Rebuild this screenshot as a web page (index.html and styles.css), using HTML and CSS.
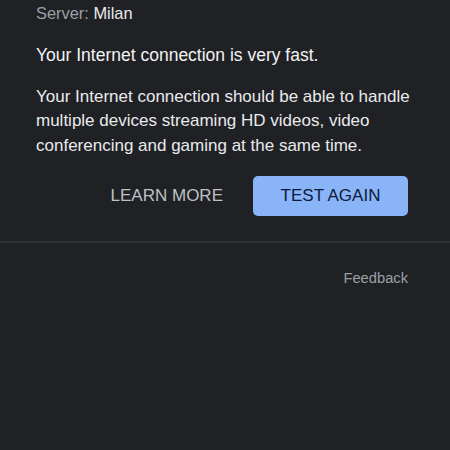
FILE: index.html
```html
<!DOCTYPE html>
<html>
<head>
<meta charset="utf-8">
<link rel="stylesheet" href="styles.css">
</head>
<body>
<div class="content">
  <div class="server"><span class="label">Server:</span> <span class="value">Milan</span></div>
  <div class="heading">Your Internet connection is very fast.</div>
  <p class="desc">Your Internet connection should be able to handle multiple devices streaming HD videos, video conferencing and gaming at the same time.</p>
  <div class="actions">
    <button class="btn-text">LEARN MORE</button>
    <button class="btn-primary">TEST AGAIN</button>
  </div>
</div>
<div class="divider"></div>
<div class="footer">
  <span class="feedback">Feedback</span>
</div>
</body>
</html>
```
FILE: styles.css
```css
html, body {
  margin: 0;
  padding: 0;
  background: #202124;
  height: 100%;
}
body {
  font-family: "Liberation Sans", Arial, sans-serif;
  color: #e8eaed;
}
.content {
  padding: 1px 40px 0 36px;
}
.server {
  font-size: 16.4px;
  line-height: 24px;
}
.server .label { color: #9aa0a6; }
.server .value { color: #e8eaed; }
.heading {
  margin-top: 18px;
  font-size: 17.5px;
  line-height: 24px;
  font-weight: 500;
  color: #f1f3f4;
}
.desc {
  margin: 18px 0 0;
  font-size: 17px;
  line-height: 24.4px;
  color: #e8eaed;
}
.actions {
  margin-top: 18px;
  margin-right: 2px;
  display: flex;
  justify-content: flex-end;
  align-items: center;
  gap: 14px;
}
button {
  font-family: "Liberation Sans", Arial, sans-serif;
  font-size: 17px;
  border: none;
  cursor: pointer;
  height: 40px;
}
.btn-text {
  background: transparent;
  color: #bdc1c6;
  padding: 0 16px;
}
.btn-primary {
  background: #8ab4f8;
  color: #0b1a38;
  width: 155px;
  border-radius: 5px;
  padding: 0;
}
.divider {
  margin-top: 25px;
  height: 2px;
  background: #2f3033;
}
.footer {
  display: flex;
  justify-content: flex-end;
  padding: 25px 42px 0 0;
}
.feedback {
  font-size: 14.7px;
  line-height: 20px;
  color: #9aa0a6;
}
```
